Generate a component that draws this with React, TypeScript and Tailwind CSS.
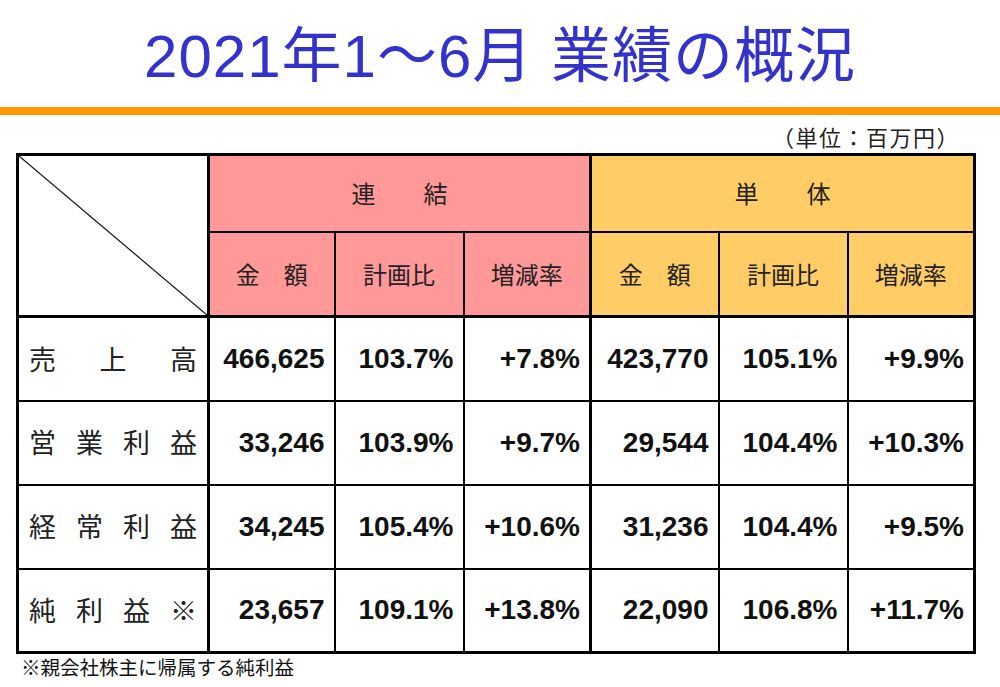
const rows = [
  { label: ["売", "上", "高"], vals: ["466,625", "103.7%", "+7.8%", "423,770", "105.1%", "+9.9%"] },
  { label: ["営", "業", "利", "益"], vals: ["33,246", "103.9%", "+9.7%", "29,544", "104.4%", "+10.3%"] },
  { label: ["経", "常", "利", "益"], vals: ["34,245", "105.4%", "+10.6%", "31,236", "104.4%", "+9.5%"] },
  { label: ["純", "利", "益", "※"], vals: ["23,657", "109.1%", "+13.8%", "22,090", "106.8%", "+11.7%"] },
];

const subHeads = ["金　額", "計画比", "増減率"];

export default function App() {
  return (
    <div className="w-[1000px] h-[687px] bg-white overflow-hidden flex flex-col font-['Liberation_Sans','Noto_Sans_CJK_JP',sans-serif] text-[#111]">
      {/* Title */}
      <header className="h-[107px] flex items-center justify-center pt-[6px]">
        <h1 className="text-[60px] leading-none text-[#3333cc] tracking-[1px]">2021年1～6月 業績の概況</h1>
      </header>
      <div className="h-[8px] bg-[#ff9900]" />

      {/* Unit */}
      <div className="h-[38px] flex items-center justify-end pr-[40px] pt-[4px]">
        <span className="text-[22px] tracking-[1.5px] text-[#222] font-['Noto_Sans_CJK_JP',sans-serif]">（単位：百万円）</span>
      </div>

      {/* Table */}
      <div className="pl-[16px]">
        <table className="border-collapse border-[3px] border-black table-fixed w-[959px]">
          <colgroup>
            <col className="w-[191px]" />
            <col className="w-[126px]" />
            <col className="w-[129px]" />
            <col className="w-[127px]" />
            <col className="w-[128px]" />
            <col className="w-[129px]" />
            <col className="w-[127px]" />
          </colgroup>
          <thead className="font-['Noto_Sans_CJK_JP',sans-serif] text-[24px] text-[#222]">
            <tr className="h-[77px]">
              <th rowSpan={2} className="relative border-[3px] border-black bg-white p-0">
                <svg className="absolute inset-0 w-full h-full" viewBox="0 0 100 100" preserveAspectRatio="none">
                  <line x1="0" y1="0" x2="100" y2="100" stroke="#111" strokeWidth="1.2" vectorEffect="non-scaling-stroke" />
                </svg>
              </th>
              <th colSpan={3} className="border-[3px] border-black border-b-2 bg-[#ff9999] font-normal">連　　結</th>
              <th colSpan={3} className="border-[3px] border-black border-b-2 bg-[#ffcc66] font-normal">単　　体</th>
            </tr>
            <tr className="h-[85px]">
              {subHeads.map((h, i) => (
                <th
                  key={"p" + h}
                  className={`border-2 border-black border-b-[3px] bg-[#ff9999] font-normal ${i === 2 ? "border-r-[3px]" : ""}`}
                >
                  {h}
                </th>
              ))}
              {subHeads.map((h) => (
                <th key={"o" + h} className="border-2 border-black border-b-[3px] bg-[#ffcc66] font-normal">
                  {h}
                </th>
              ))}
            </tr>
          </thead>
          <tbody>
            {rows.map((r) => (
              <tr key={r.label.join("")} className="h-[84px]">
                <td className="border-2 border-black border-r-[3px] px-[10px]">
                  <div className="flex justify-between font-['Noto_Sans_CJK_JP',sans-serif] text-[27px] text-[#222]">
                    {r.label.map((c, i) => (
                      <span key={i}>{c}</span>
                    ))}
                  </div>
                </td>
                {r.vals.map((v, i) => (
                  <td
                    key={i}
                    className={`border-2 border-black text-right pr-[9px] text-[28px] font-bold text-[#111] ${i === 2 ? "border-r-[3px]" : ""}`}
                  >
                    {v}
                  </td>
                ))}
              </tr>
            ))}
          </tbody>
        </table>
      </div>

      {/* Footnote */}
      <p className="pl-[21px] pt-[1px] text-[19.5px] leading-[24px] text-[#111] font-['Noto_Sans_CJK_JP',sans-serif]">
        ※親会社株主に帰属する純利益
      </p>
    </div>
  );
}
